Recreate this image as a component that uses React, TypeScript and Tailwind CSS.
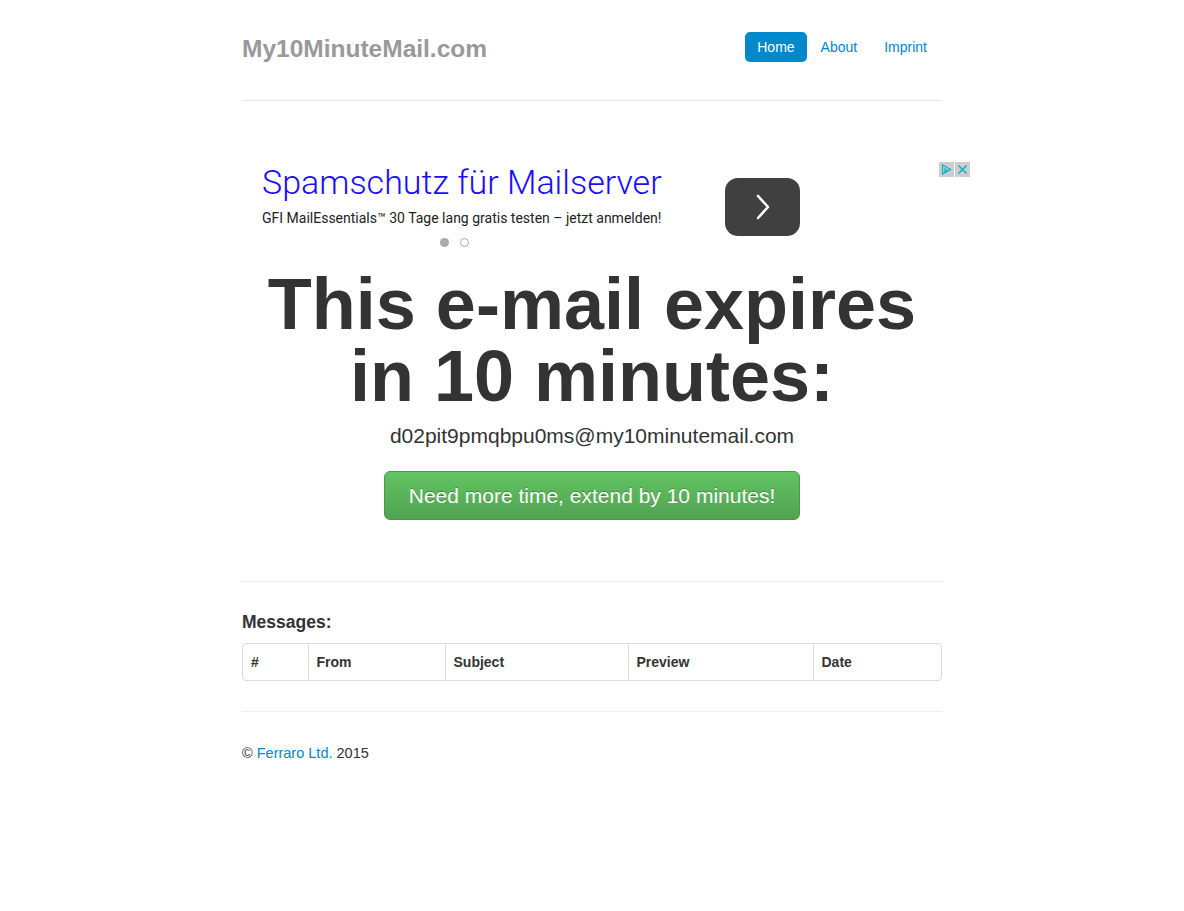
import React from "react";

const sans = { fontFamily: '"Liberation Sans", Arial, Helvetica, sans-serif' };

function AdChoices() {
  return (
    <div className="absolute right-0 top-0 flex gap-[1px]">
      <div className="w-[15px] h-[15px] bg-[#cdcdcd] flex items-center justify-center">
        <svg width="11" height="11" viewBox="0 0 11 11" fill="none" stroke="#00aecd" strokeWidth="1.2">
          <path d="M1.5 1 L1.5 10 L9.5 5.5 Z" />
          <path d="M4 4 L4 7.5 L6.5 5.7" />
        </svg>
      </div>
      <div className="w-[15px] h-[15px] bg-[#cdcdcd] flex items-center justify-center">
        <svg width="11" height="11" viewBox="0 0 11 11" fill="none" stroke="#00aecd" strokeWidth="1.3">
          <path d="M1.5 1.5 L9.5 9.5 M9.5 1.5 L1.5 9.5" />
        </svg>
      </div>
    </div>
  );
}

function Ad() {
  return (
    <div className="relative w-[728px] h-[90px] text-left" style={{ fontFamily: 'Roboto, "Noto Sans", sans-serif' }}>
      <AdChoices />
      <div className="absolute left-[20px] top-[0px] text-[34px] leading-[40px] font-light text-[#1a0dff] whitespace-nowrap">
        Spamschutz für Mailserver
      </div>
      <div className="absolute left-[20px] top-[47px] text-[14px] leading-[18px] text-[#222] whitespace-nowrap">
        GFI MailEssentials™ 30 Tage lang gratis testen – jetzt anmelden!
      </div>
      <div className="absolute left-[198px] top-[76px] flex gap-[11px]">
        <span className="block w-[9px] h-[9px] rounded-full bg-[#aaaaaa]" />
        <span className="block w-[9px] h-[9px] rounded-full border border-[#aaaaaa]" />
      </div>
      <div className="absolute left-[483px] top-[16px] w-[75px] h-[58px] rounded-[13px] bg-[#404040] flex items-center justify-center">
        <svg width="16" height="26" viewBox="0 0 16 26" fill="none" stroke="#ffffff" strokeWidth="2.6" strokeLinecap="round" strokeLinejoin="round">
          <path d="M3 2 L13 13 L3 24" />
        </svg>
      </div>
    </div>
  );
}

export default function App() {
  return (
    <div className="min-h-[911px] bg-white text-[#333333]" style={sans}>
      <div className="w-[700px] mx-auto">
        {/* Header */}
        <div className="h-[101px] border-b border-[#e5e5e5] flex justify-between items-start">
          <h3 className="mt-[29px] text-[24.5px] leading-[40px] font-bold text-[#999999]">My10MinuteMail.com</h3>
          <ul className="mt-[32px] mr-[2px] flex gap-[2px] text-[14px] leading-[14px]">
            <li>
              <a className="block px-[12px] py-[8px] rounded-[5px] bg-[#0088cc] text-white">Home</a>
            </li>
            <li>
              <a className="block px-[12px] py-[8px] rounded-[5px] text-[#0088cc]">About</a>
            </li>
            <li>
              <a className="block px-[13px] py-[8px] rounded-[5px] text-[#0088cc]">Imprint</a>
            </li>
          </ul>
        </div>

        {/* Jumbotron */}
        <div className="pt-[61px] pb-[61px] text-center border-b border-[#eeeeee]">
          <Ad />
          <h1 className="mt-[16px] text-[72px] leading-[72px] font-bold text-[#333333]">
            This e-mail expires in 10 minutes:
          </h1>
          <p className="mt-[9px] text-[21px] leading-[30px] text-[#333333]">d02pit9pmqbpu0ms@my10minutemail.com</p>
          <button
            className="mt-[20px] w-[416px] h-[49px] rounded-[6px] border border-[#4a9a4a] text-white text-[21px] leading-[25px] bg-gradient-to-b from-[#62c462] to-[#51a351]"
            style={{ ...sans, textShadow: "0 -1px 0 rgba(0,0,0,0.25)" }}
          >
            Need more time, extend by 10 minutes!
          </button>
        </div>

        {/* Messages */}
        <div className="pt-[30px] pb-[30px] border-b border-[#eeeeee]">
          <h4 className="text-[17.5px] leading-[20px] font-bold text-[#333333]">Messages:</h4>
          <div className="mt-[11px] border border-[#dddddd] rounded-[4px] overflow-hidden">
            <table className="w-full text-[14px] leading-[20px] border-collapse">
              <thead>
                <tr className="text-left">
                  <th className="w-[65px] px-[8px] py-[8px] font-bold">#</th>
                  <th className="w-[137px] px-[8px] py-[8px] font-bold border-l border-[#dddddd]">From</th>
                  <th className="w-[183px] px-[8px] py-[8px] font-bold border-l border-[#dddddd]">Subject</th>
                  <th className="w-[185px] px-[8px] py-[8px] font-bold border-l border-[#dddddd]">Preview</th>
                  <th className="px-[8px] py-[8px] font-bold border-l border-[#dddddd]">Date</th>
                </tr>
              </thead>
            </table>
          </div>
        </div>

        {/* Footer */}
        <div className="pt-[31px] text-[14.5px] leading-[20px]">
          © <a className="text-[#0088cc]">Ferraro Ltd.</a> 2015
        </div>
      </div>
    </div>
  );
}
